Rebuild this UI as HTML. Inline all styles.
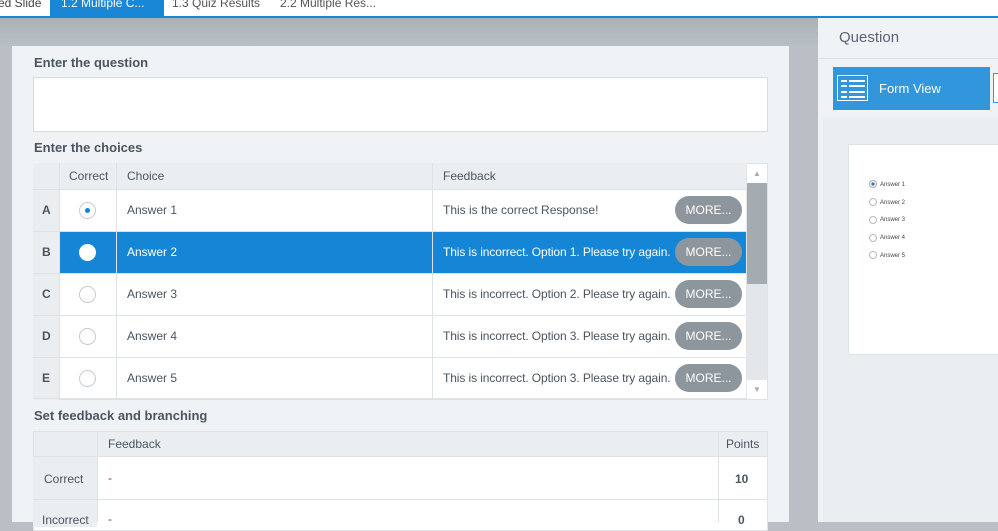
<!DOCTYPE html>
<html><head><style>
*{margin:0;padding:0;box-sizing:border-box}
body{width:998px;height:522px;overflow:hidden;position:relative;font-family:"Liberation Sans",sans-serif;background:#b9bfc5}
.a{position:absolute}
.t{font-size:12px;color:#4a5560;white-space:nowrap}
.h{font-size:13px;font-weight:bold;color:#4a5560}
.more{position:absolute;left:675px;width:67px;height:28px;border-radius:14px;background:#8e969d;color:#fff;font-size:12px;text-align:center;line-height:28px}
.rad{position:absolute;left:79px;width:17px;height:17px;border-radius:50%;border:1px solid #c6ccd1;background:#fff}
</style></head><body>
<div class="a" style="left:0;top:0;width:998px;height:16px;background:#fff"></div>
<div class="a" style="left:0;top:16px;width:998px;height:2px;background:#1a86d6"></div>
<div class="a" style="left:50px;top:0;width:114px;height:17px;background:#1a86d6"></div>
<div class="a t" style="left:-2px;top:-4px;font-size:12px;color:#444">ed Slide</div>
<div class="a t" style="left:61px;top:-4px;font-size:12px;color:#fff">1.2 Multiple C...</div>
<div class="a t" style="left:172px;top:-4px;font-size:12px;color:#555">1.3 Quiz Results</div>
<div class="a t" style="left:280px;top:-4px;font-size:12px;color:#555">2.2 Multiple Res...</div>
<div class="a" style="left:0;top:18px;width:818px;height:30px;background:linear-gradient(#a9b0b6,#bac0c6)"></div>

<div class="a" style="left:818px;top:18px;width:180px;height:504px;background:#f0f3f6"></div>
<div class="a" style="left:818px;top:58px;width:180px;height:1px;background:#dde2e6"></div>
<div class="a" style="left:839px;top:29px;font-size:15px;color:#5a6470">Question</div>
<div class="a" style="left:833px;top:67px;width:157px;height:43px;background:#3296dd"></div>
<div class="a" style="left:837px;top:75px;width:31px;height:26px;border:1px solid #fff"></div>
<div class="a" style="left:841px;top:80px;width:24px;height:2px;background:#fff;box-shadow:0 5px #fff,0 11px #fff,0 16px #fff"></div>
<div class="a" style="left:847px;top:80px;width:2px;height:18px;background:#3296dd"></div>
<div class="a" style="left:879px;top:81px;font-size:13px;color:#fff">Form View</div>
<div class="a" style="left:993px;top:73px;width:8px;height:30px;border:1px solid #3296dd;background:#fff"></div>
<div class="a" style="left:823px;top:118px;width:175px;height:404px;background:#eaeef1"></div>
<div class="a" style="left:848px;top:144px;width:152px;height:211px;background:#fff;border:1px solid #dde2e6"></div>
<div class="a" style="left:869px;top:177px">
<div style="font-size:6px;color:#444;line-height:17.7px">
<div><span style="display:inline-block;width:8px;height:8px;border-radius:50%;border:1px solid #aaa;background:radial-gradient(#3a6fc0 35%,#fff 45%);vertical-align:middle;margin-right:3px"></span>Answer 1</div>
<div><span style="display:inline-block;width:8px;height:8px;border-radius:50%;border:1px solid #bbb;vertical-align:middle;margin-right:3px"></span>Answer 2</div>
<div><span style="display:inline-block;width:8px;height:8px;border-radius:50%;border:1px solid #bbb;vertical-align:middle;margin-right:3px"></span>Answer 3</div>
<div><span style="display:inline-block;width:8px;height:8px;border-radius:50%;border:1px solid #bbb;vertical-align:middle;margin-right:3px"></span>Answer 4</div>
<div><span style="display:inline-block;width:8px;height:8px;border-radius:50%;border:1px solid #bbb;vertical-align:middle;margin-right:3px"></span>Answer 5</div>
</div></div>

<div class="a" style="left:12px;top:46px;width:777px;height:476px;background:#f0f3f6"></div>
<div class="a h" style="left:34px;top:55px">Enter the question</div>
<div class="a" style="left:33px;top:77px;width:735px;height:55px;background:#fff;border:1px solid #d5dbe0"></div>
<div class="a h" style="left:34px;top:140px">Enter the choices</div>

<div class="a" style="left:33px;top:163px;width:735px;height:237px;background:#fff;border:1px solid #dde2e6"></div>
<div class="a" style="left:33px;top:163px;width:713px;height:26px;background:#eaeef1"></div>
<div class="a" style="left:33px;top:189px;width:26px;height:211px;background:#eaeef1"></div>
<div class="a" style="left:59px;top:231px;width:687px;height:42px;background:#1585d5"></div>
<div class="a" style="left:59px;top:163px;width:1px;height:237px;background:#dde2e6"></div>
<div class="a" style="left:116px;top:163px;width:1px;height:237px;background:#dde2e6"></div>
<div class="a" style="left:432px;top:163px;width:1px;height:237px;background:#dde2e6"></div>
<div class="a" style="left:33px;top:189px;width:713px;height:1px;background:#dde2e6;box-shadow:0 42px #dde2e6,0 84px #dde2e6,0 126px #dde2e6,0 168px #dde2e6,0 209px #dde2e6"></div>
<div class="a t" style="left:69px;top:169px">Correct</div>
<div class="a t" style="left:127px;top:169px">Choice</div>
<div class="a t" style="left:443px;top:169px">Feedback</div>
<div class="a" style="left:746px;top:164px;width:21px;height:235px;background:#e3e7ea"></div>
<div class="a" style="left:747px;top:164px;width:20px;height:19px;background:#fff;color:#aaa;font-size:8px;text-align:center;line-height:19px">▲</div>
<div class="a" style="left:747px;top:183px;width:20px;height:101px;background:#a4abb1"></div>
<div class="a" style="left:747px;top:380px;width:20px;height:19px;background:#fff;color:#aaa;font-size:8px;text-align:center;line-height:19px">▼</div>

<div class="a t" style="left:42px;top:203px;font-weight:bold">A</div>
<div class="a t" style="left:42px;top:245px;font-weight:bold">B</div>
<div class="a t" style="left:42px;top:287px;font-weight:bold">C</div>
<div class="a t" style="left:42px;top:329px;font-weight:bold">D</div>
<div class="a t" style="left:42px;top:371px;font-weight:bold">E</div>
<div class="rad" style="top:202px"><div style="position:absolute;left:5px;top:5px;width:5px;height:5px;border-radius:50%;background:#1585d5"></div></div>
<div class="rad" style="top:244px;border-color:#fff"></div>
<div class="rad" style="top:286px"></div>
<div class="rad" style="top:328px"></div>
<div class="rad" style="top:370px"></div>
<div class="a t" style="left:127px;top:203px">Answer 1</div>
<div class="a t" style="left:127px;top:245px;color:#fff">Answer 2</div>
<div class="a t" style="left:127px;top:287px">Answer 3</div>
<div class="a t" style="left:127px;top:329px">Answer 4</div>
<div class="a t" style="left:127px;top:371px">Answer 5</div>
<div class="a t" style="left:443px;top:203px">This is the correct Response!</div>
<div class="a t" style="left:443px;top:245px;color:#fff;letter-spacing:-.1px">This is incorrect. Option 1. Please try again.</div>
<div class="a t" style="left:443px;top:287px;letter-spacing:-.1px">This is incorrect. Option 2. Please try again.</div>
<div class="a t" style="left:443px;top:329px;letter-spacing:-.1px">This is incorrect. Option 3. Please try again.</div>
<div class="a t" style="left:443px;top:371px;letter-spacing:-.1px">This is incorrect. Option 3. Please try again.</div>
<div class="more" style="top:196px">MORE...</div>
<div class="more" style="top:238px">MORE...</div>
<div class="more" style="top:280px">MORE...</div>
<div class="more" style="top:322px">MORE...</div>
<div class="more" style="top:364px">MORE...</div>

<div class="a h" style="left:34px;top:408px">Set feedback and branching</div>
<div class="a" style="left:33px;top:431px;width:735px;height:100px;background:#fff;border:1px solid #dde2e6"></div>
<div class="a" style="left:33px;top:431px;width:735px;height:26px;background:#eaeef1;border:1px solid #dde2e6"></div>
<div class="a" style="left:33px;top:457px;width:64px;height:70px;background:#eaeef1"></div>
<div class="a" style="left:97px;top:431px;width:1px;height:91px;background:#dde2e6"></div>
<div class="a" style="left:718px;top:431px;width:1px;height:91px;background:#dde2e6"></div>
<div class="a" style="left:33px;top:499px;width:735px;height:1px;background:#dde2e6"></div>
<div class="a t" style="left:108px;top:437px">Feedback</div>
<div class="a t" style="left:726px;top:437px">Points</div>
<div class="a t" style="left:44px;top:472px">Correct</div>
<div class="a t" style="left:108px;top:471px">-</div>
<div class="a t" style="left:735px;top:472px;font-weight:bold">10</div>
<div class="a t" style="left:42px;top:513px">Incorrect</div>
<div class="a t" style="left:108px;top:512px">-</div>
<div class="a t" style="left:738px;top:513px;font-weight:bold">0</div>
</body></html>
